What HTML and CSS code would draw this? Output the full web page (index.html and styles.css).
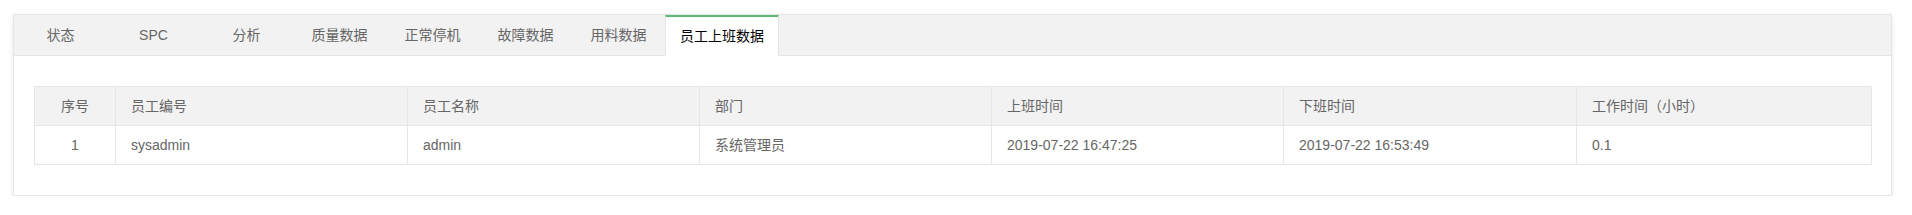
FILE: index.html
```html
<!DOCTYPE html>
<html>
<head>
  <meta charset="UTF-8">
  <link rel="stylesheet" href="styles.css">
</head>
<body>
  <div class="tab-card">
    <ul class="tab-title">
      <li>状态</li>
      <li>SPC</li>
      <li>分析</li>
      <li>质量数据</li>
      <li>正常停机</li>
      <li>故障数据</li>
      <li>用料数据</li>
      <li class="this">员工上班数据</li>
    </ul>

    <div class="tab-content">
      <table class="data-table">
        <colgroup>
          <col style="width: 81px">
          <col style="width: 292px">
          <col style="width: 292px">
          <col style="width: 292px">
          <col style="width: 292px">
          <col style="width: 293px">
          <col>
        </colgroup>
        <thead>
          <tr>
            <th class="center">序号</th>
            <th>员工编号</th>
            <th>员工名称</th>
            <th>部门</th>
            <th>上班时间</th>
            <th>下班时间</th>
            <th>工作时间（小时）</th>
          </tr>
        </thead>
        <tbody>
          <tr>
            <td class="center">1</td>
            <td>sysadmin</td>
            <td>admin</td>
            <td>系统管理员</td>
            <td>2019-07-22 16:47:25</td>
            <td>2019-07-22 16:53:49</td>
            <td>0.1</td>
          </tr>
        </tbody>
      </table>
    </div>
  </div>
</body>
</html>
```

FILE: styles.css
```css
body {
  margin: 0;
  background: #fff;
  font-family: 'Liberation Sans', Arial, 'Noto Sans CJK SC', sans-serif;
  font-size: 14px;
  color: #666;
}

/* 卡片式选项卡 */
.tab-card {
  margin: 14px 20px 0 13px;
  border: 1px solid #e6e6e6;
  box-shadow: 0 2px 5px 0 rgba(0, 0, 0, 0.1);
  background: #fff;
}

.tab-title {
  display: flex;
  align-items: flex-start;
  height: 40px;
  margin: 0;
  padding: 0;
  list-style: none;
  background: #f2f2f2;
  border-bottom: 1px solid #e6e6e6;
}

.tab-title li {
  box-sizing: border-box;
  min-width: 93px;
  height: 40px;
  padding: 0 14px;
  line-height: 40px;
  text-align: center;
  white-space: nowrap;
  color: #666;
  cursor: pointer;
}

.tab-title li.this {
  height: 41px;
  line-height: 38px;
  min-width: 0;
  background: #fff;
  color: #000;
  border-top: 2px solid #5fb878;
  border-left: 1px solid #e6e6e6;
  border-right: 1px solid #e6e6e6;
}

.tab-content {
  padding: 30px 19px 30px 20px;
}

/* 数据表格 */
.data-table {
  width: 100%;
  table-layout: fixed;
  border-collapse: collapse;
  border: 1px solid #e6e6e6;
}

.data-table th,
.data-table td {
  height: 20px;
  padding: 9px 15px;
  line-height: 20px;
  border: 1px solid #e6e6e6;
  text-align: left;
  font-weight: normal;
  color: #666;
  white-space: nowrap;
}

.data-table th {
  background: #f2f2f2;
}

.data-table .center {
  text-align: center;
}
```
